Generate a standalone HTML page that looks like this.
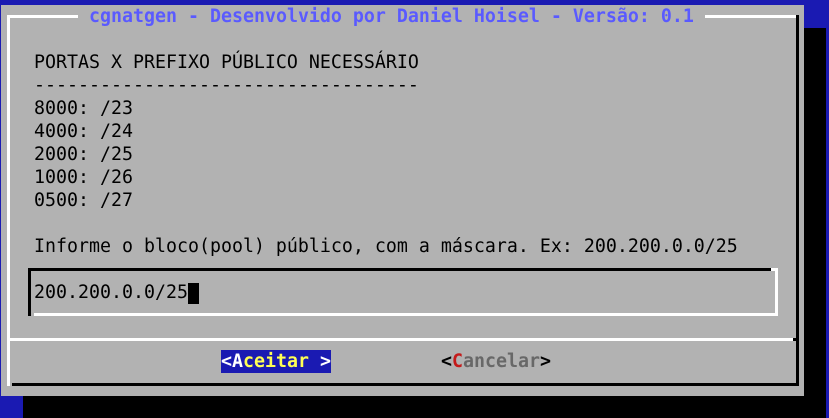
<!DOCTYPE html>
<html><head><meta charset="utf-8"><style>
body{margin:0;width:829px;height:418px;background:#1a1ab2;position:relative;overflow:hidden;font-family:"DejaVu Sans Mono","Liberation Mono",monospace;font-size:18.27px;}
div{position:absolute;}
.t{white-space:pre;line-height:23px;color:#000;}
</style></head><body>
<div style="left:1px;top:5px;width:803px;height:391px;background:#b2b2b2"></div>
<div style="left:804px;top:28px;width:22px;height:390px;background:#000"></div>
<div style="left:23px;top:396px;width:803px;height:22px;background:#000"></div>
<div style="left:7px;top:15px;width:3px;height:371px;background:#fff"></div>
<div style="left:7px;top:15px;width:790px;height:3px;background:#fff"></div>
<div style="left:796px;top:15px;width:3px;height:371px;background:#000"></div>
<div style="left:12px;top:383px;width:787px;height:3px;background:#000"></div>
<div style="left:7px;top:338px;width:786px;height:3px;background:#fff"></div>
<div style="left:793px;top:338px;width:4px;height:3px;background:#000"></div>
<div style="left:28px;top:268px;width:743px;height:3px;background:#000"></div>
<div style="left:28px;top:268px;width:3px;height:48px;background:#000"></div>
<div style="left:771px;top:268px;width:7px;height:3px;background:#fff"></div>
<div style="left:775px;top:268px;width:3px;height:48px;background:#fff"></div>
<div style="left:34px;top:313px;width:744px;height:3px;background:#fff"></div>
<div class="t" style="left:78px;top:5px;background:#b2b2b2;color:#5a5aff;font-weight:bold;padding:0 11px 0 11px">cgnatgen - Desenvolvido por Daniel Hoisel - Versão: 0.1</div>
<div class="t" style="left:34px;top:51px">PORTAS X PREFIXO PÚBLICO NECESSÁRIO
-----------------------------------
8000: /23
4000: /24
2000: /25
1000: /26
0500: /27

Informe o bloco(pool) público, com a máscara. Ex: 200.200.0.0/25</div>
<div class="t" style="left:34px;top:281px">200.200.0.0/25</div>
<div style="left:188px;top:283px;width:11px;height:21px;background:#000"></div>
<div class="t" style="left:221px;top:350px;width:110px;background:#1a1ab2;font-weight:bold;color:#fff">&lt;A<span style="color:#ffff55">ceitar</span> &gt;</div>
<div class="t" style="left:441px;top:350px;font-weight:bold">&lt;<span style="color:#c41a1a">C</span><span style="color:#686868">ancelar</span>&gt;</div>
</body></html>
